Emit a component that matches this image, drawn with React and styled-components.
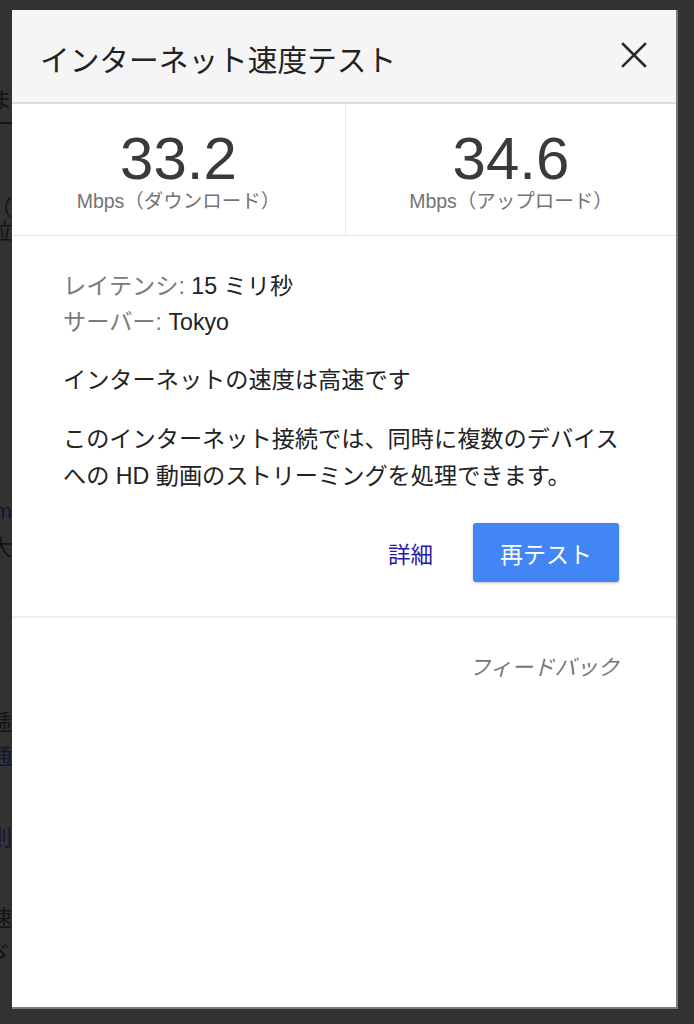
import React from "react";
import styled, { createGlobalStyle } from "styled-components";

const Global = createGlobalStyle`
  html, body { margin: 0; padding: 0; background: #323231; }
  body { font-family: "Liberation Sans", "Noto Sans CJK JP", sans-serif; }
  * { box-sizing: border-box; }
`;

const Stage = styled.div`
  position: relative;
  width: 694px;
  height: 1024px;
  overflow: hidden;
  background: #323231;
`;

const BackPage = styled.div`
  position: absolute;
  left: 0;
  top: 0;
  width: 12px;
  height: 1024px;
  overflow: hidden;
  display: flex;
  flex-direction: column;
  align-items: flex-end;
  font-size: 22px;
  color: #141414;
`;

const BackLine = styled.div`
  white-space: nowrap;
  height: ${(p) => p.$h}px;
  line-height: ${(p) => p.$h}px;
  color: ${(p) => p.$c || "#141414"};
  border-bottom: ${(p) => (p.$rule ? "2px solid #151515" : "none")};
`;

const Dialog = styled.div`
  position: absolute;
  left: 12px;
  top: 10px;
  width: 666px;
  height: 999px;
  background: #fff;
  border-right: 2px solid #7a7a7a;
  border-bottom: 2px solid #7a7a7a;
  display: flex;
  flex-direction: column;
`;

const Header = styled.div`
  height: 94px;
  background: #f5f5f5;
  border-bottom: 2px solid #dcdcdc;
  display: flex;
  align-items: center;
  justify-content: space-between;
  padding: 0 27px 0 28px;
`;

const Title = styled.h1`
  margin: 0;
  font-weight: 400;
  font-size: 29.7px;
  color: #222;
  padding-top: 4px;
`;

const Close = styled.button`
  border: 0;
  background: transparent;
  padding: 0;
  width: 30px;
  height: 30px;
  display: flex;
  align-items: center;
  justify-content: center;
  margin-top: -2px;
  cursor: pointer;
`;

const Speeds = styled.div`
  display: grid;
  grid-template-columns: 333px 1fr;
  height: 132px;
  border-bottom: 1px solid #e6e6e6;
`;

const SpeedCell = styled.div`
  display: flex;
  flex-direction: column;
  align-items: center;
  justify-content: center;
  border-left: ${(p) => (p.$divider ? "1px solid #ececec" : "none")};
  padding-top: 2px;
`;

const Value = styled.div`
  font-size: 60px;
  line-height: 60px;
  color: #3a3a3a;
`;

const Unit = styled.div`
  font-size: 19.5px;
  line-height: 24px;
  color: #737373;
`;

const Body = styled.div`
  padding: 32px 57px 0 51px;
  display: flex;
  flex-direction: column;
`;

const Meta = styled.div`
  font-size: 23.2px;
  line-height: 36px;
  color: #222;
`;

const Label = styled.span`
  color: #7a7a7a;
`;

const Text = styled.p`
  margin: ${(p) => p.$mt}px 0 0;
  font-size: 23.2px;
  line-height: ${(p) => p.$lh || 36}px;
  color: #222;
`;

const Actions = styled.div`
  display: flex;
  justify-content: flex-end;
  align-items: center;
  gap: 40px;
  margin-top: 28px;
  padding-bottom: 34px;
`;

const Link = styled.a`
  font-size: 22.5px;
  color: #2a1aa8;
  text-decoration: none;
  cursor: pointer;
`;

const Primary = styled.button`
  width: 146px;
  height: 59px;
  border: 0;
  border-radius: 3px;
  background: #4285f4;
  color: #fff;
  font-family: inherit;
  font-size: 23px;
  box-shadow: 0 1px 3px rgba(0, 0, 0, 0.25);
  cursor: pointer;
`;

const Divider = styled.div`
  height: 2px;
  background: #eeeeee;
`;

const Footer = styled.div`
  display: flex;
  justify-content: flex-end;
  padding: 32px 57px 0 0;
`;

const Feedback = styled.a`
  font-size: 21.5px;
  font-style: italic;
  color: #767676;
  cursor: pointer;
`;

export default function App() {
  return (
    <>
      <Global />
      <Stage>
        <BackPage>
          <BackLine $h={78}> </BackLine>
          <BackLine $h={46} $rule>ま</BackLine>
          <BackLine $h={48}> </BackLine>
          <BackLine $h={24}>）</BackLine>
          <BackLine $h={24}>・（</BackLine>
          <BackLine $h={24}>拉</BackLine>
          <BackLine $h={250}> </BackLine>
          <BackLine $h={36} $c="#14143a">m</BackLine>
          <BackLine $h={36}>大</BackLine>
          <BackLine $h={140}> </BackLine>
          <BackLine $h={34}>逓</BackLine>
          <BackLine $h={34} $c="#14143a">通</BackLine>
          <BackLine $h={44}> </BackLine>
          <BackLine $h={40} $c="#14143a">則</BackLine>
          <BackLine $h={44}> </BackLine>
          <BackLine $h={34}>速</BackLine>
          <BackLine $h={34}>ゞ</BackLine>
        </BackPage>
        <Dialog>
          <Header>
            <Title>インターネット速度テスト</Title>
            <Close aria-label="閉じる">
              <svg width="26" height="26" viewBox="0 0 26 26">
                <path d="M2 2 L24 24 M24 2 L2 24" stroke="#2a2a2a" strokeWidth="2.6" strokeLinecap="square" />
              </svg>
            </Close>
          </Header>
          <Speeds>
            <SpeedCell>
              <Value>33.2</Value>
              <Unit>Mbps（ダウンロード）</Unit>
            </SpeedCell>
            <SpeedCell $divider>
              <Value>34.6</Value>
              <Unit>Mbps（アップロード）</Unit>
            </SpeedCell>
          </Speeds>
          <Body>
            <Meta>
              <div><Label>レイテンシ:</Label> 15 ミリ秒</div>
              <div><Label>サーバー:</Label> Tokyo</div>
            </Meta>
            <Text $mt={22}>インターネットの速度は高速です</Text>
            <Text $mt={23} $lh={37}>
              このインターネット接続では、同時に複数のデバイスへの HD 動画のストリーミングを処理できます。
            </Text>
            <Actions>
              <Link>詳細</Link>
              <Primary>再テスト</Primary>
            </Actions>
          </Body>
          <Divider />
          <Footer>
            <Feedback>フィードバック</Feedback>
          </Footer>
        </Dialog>
      </Stage>
    </>
  );
}
